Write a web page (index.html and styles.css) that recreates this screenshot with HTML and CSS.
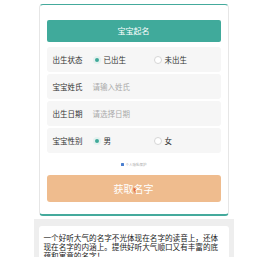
FILE: index.html
```html
<!DOCTYPE html>
<html lang="zh-CN">
<head>
  <meta charset="UTF-8">
  <meta name="viewport" content="width=device-width, initial-scale=1.0">
  <title>宝宝起名</title>
  <link rel="stylesheet" href="styles.css">
</head>
<body>
  <div class="card">
    <div class="title">宝宝起名</div>
    <div class="rows">
      <div class="row">
        <span class="label">出生状态</span>
        <span class="radio checked">已出生</span>
        <span class="radio">未出生</span>
      </div>
      <div class="row">
        <span class="label">宝宝姓氏</span>
        <span class="hint">请输入姓氏</span>
      </div>
      <div class="row">
        <span class="label">出生日期</span>
        <span class="hint">请选择日期</span>
      </div>
      <div class="row">
        <span class="label">宝宝性别</span>
        <span class="radio checked">男</span>
        <span class="radio">女</span>
      </div>
    </div>
    <div class="privacy"><i class="shield"></i>个人隐私保护</div>
    <button class="submit">获取名字<svg class="cursor" width="4" height="6" viewBox="0 0 4 6"><path d="M0.5 0.5 L3.5 3 L2 3.3 L2.8 5.5 L1.8 5.8 L1.2 3.6 L0.5 4.6 Z" fill="#e0603a"/></svg></button>
  </div>

  <div class="about">
    <div class="about-box">一个好听大气的名字不光体现在名字的读音上，还体现在名字的内涵上。提供好听大气顺口又有丰富的底蕴和寓意的名字！</div>
  </div>
</body>
</html>
```

FILE: styles.css
```css
body {
  margin: 0;
  background: #fff;
  font-family: "Noto Sans CJK SC", "Noto Sans", sans-serif;
  color: #333;
}
.card {
  width: 174px;
  margin: 4px auto 0;
  padding: 15px 7px 12px;
  background: #fff;
  border: 1px solid #e6e6e6;
  border-top-color: #44aa9c;
  border-bottom: 2px solid #44aa9c;
  border-radius: 4px;
}
.title {
  height: 22px;
  line-height: 22px;
  background: #40aa9b;
  color: #fff;
  font-size: 8px;
  text-align: center;
  border-radius: 2px;
}
.rows {
  display: flex;
  flex-direction: column;
  gap: 2px;
  margin-top: 5px;
}
.row {
  display: flex;
  align-items: center;
  height: 25px;
  padding-left: 6px;
  background: #f6f6f6;
  border-radius: 3px;
  font-size: 7.5px;
}
.label {
  width: 40px;
  color: #333;
}
.hint {
  color: #aaa;
}
.radio {
  display: flex;
  align-items: center;
  width: 61px;
  color: #333;
}
.radio::before {
  content: "";
  box-sizing: border-box;
  width: 8px;
  height: 8px;
  margin-right: 3px;
  border: 1px solid #d6d6d6;
  border-radius: 50%;
  background: #fff;
}
.radio.checked::before {
  border: 2px solid #e4f1ef;
  background: #3fa999;
}
.privacy {
  display: flex;
  align-items: center;
  justify-content: center;
  gap: 2px;
  height: 22px;
  font-size: 3.5px;
  color: #aaa;
}
.shield {
  width: 3px;
  height: 3px;
  background: #4a7fd0;
  border-radius: 0.5px;
}
.submit {
  position: relative;
  display: block;
  width: 100%;
  height: 27px;
  border: none;
  border-radius: 3px;
  background: #efbc8e;
  color: #fff;
  font-family: inherit;
  font-size: 10px;
}
.cursor {
  position: absolute;
  left: 86px;
  top: 12px;
}
.about {
  width: 190px;
  margin: 3px auto 0;
  padding: 7px 5px;
  background: #eee;
}
.about-box {
  padding: 7px 5px 5px;
  background: #fff;
  border-radius: 3px;
  font-size: 7.6px;
  line-height: 9.2px;
  color: #222;
}
```
